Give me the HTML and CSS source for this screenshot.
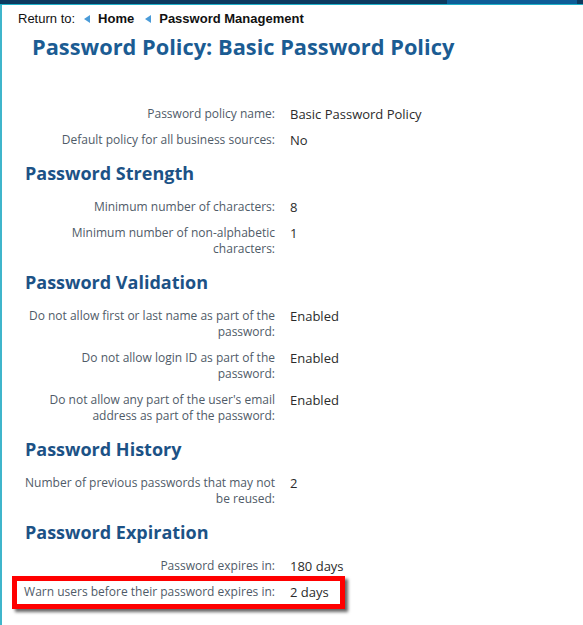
FILE: index.html
```html
<!DOCTYPE html>
<html>
<head>
<meta charset="utf-8">
<link rel="stylesheet" href="styles.css">
</head>
<body>
<div class="topbar"><div class="topbar-seg"></div></div>
<div class="page">
  <nav class="crumbs">
    <span class="crumbs-lead">Return to:</span>
    <span class="tri"></span><a class="crumb" href="#">Home</a>
    <span class="tri"></span><a class="crumb" href="#">Password Management</a>
  </nav>
  <h1 class="title">Password Policy: Basic Password Policy</h1>

  <div class="content">
    <div class="fields first">
      <div class="row"><div class="label">Password policy name:</div><div class="value">Basic Password Policy</div></div>
      <div class="row"><div class="label">Default policy for all business sources:</div><div class="value">No</div></div>
    </div>

    <h2 class="section">Password Strength</h2>
    <div class="fields">
      <div class="row"><div class="label">Minimum number of characters:</div><div class="value">8</div></div>
      <div class="row"><div class="label">Minimum number of non-alphabetic characters:</div><div class="value">1</div></div>
    </div>

    <h2 class="section">Password Validation</h2>
    <div class="fields">
      <div class="row"><div class="label">Do not allow first or last name as part of the password:</div><div class="value">Enabled</div></div>
      <div class="row"><div class="label">Do not allow login ID as part of the password:</div><div class="value">Enabled</div></div>
      <div class="row"><div class="label">Do not allow any part of the user's email address as part of the password:</div><div class="value">Enabled</div></div>
    </div>

    <h2 class="section">Password History</h2>
    <div class="fields">
      <div class="row"><div class="label">Number of previous passwords that may not be reused:</div><div class="value">2</div></div>
    </div>

    <h2 class="section">Password Expiration</h2>
    <div class="fields">
      <div class="row"><div class="label">Password expires in:</div><div class="value">180 days</div></div>
      <div class="row highlight"><div class="label nowrap">Warn users before their password expires in:</div><div class="value">2 days</div></div>
    </div>
  </div>
</div>
</body>
</html>
```

FILE: styles.css
```css
html, body {
  margin: 0;
  padding: 0;
  background: #fff;
}
body {
  font-family: "Open Sans", "DejaVu Sans", sans-serif;
  height: 625px;
  overflow: hidden;
}
.topbar {
  height: 4px;
  background: #0d3a5f;
  border-bottom: 1px solid #1fb0c8;
  position: relative;
}
.topbar-seg {
  position: absolute;
  left: 447px;
  width: 130px;
  top: 0;
  height: 4px;
  background: #0e5d97;
}
.page {
  border-left: 2px solid #3fb5cb;
  min-height: 620px;
}
.crumbs {
  padding: 6px 0 0 16px;
  font-family: "Liberation Sans", Arial, sans-serif;
  font-size: 13px;
  line-height: 16px;
  color: #111;
  display: flex;
  align-items: center;
}
.crumbs-lead {
  margin-right: 9px;
}
.tri {
  width: 0;
  height: 0;
  border-top: 4px solid transparent;
  border-bottom: 4px solid transparent;
  border-right: 6px solid #4a9bd8;
  margin-right: 8px;
}
.crumb {
  color: #111;
  font-weight: bold;
  text-decoration: none;
  margin-right: 11px;
}
.title {
  margin: 5px 0 0 30px;
  font-size: 21.8px;
  line-height: 30px;
  font-weight: 700;
  color: #1b5c93;
}
.content {
  padding-left: 23px;
}
.fields {
  display: flex;
  flex-direction: column;
  gap: 10px;
}
.fields.first {
  margin-top: 44px;
}
.row {
  display: flex;
  gap: 15px;
  font-size: 12px;
  line-height: 16px;
}
.label {
  width: 250px;
  flex-shrink: 0;
  text-align: right;
  color: #4f5b68;
}
.label.nowrap {
  white-space: nowrap;
  display: flex;
  justify-content: flex-end;
}
.value {
  font-size: 13px;
  color: #2b2b2b;
}
.section {
  margin: 13px 0 14px 0;
  font-size: 18px;
  line-height: 24px;
  font-weight: 700;
  color: #1c5286;
}
.highlight {
  width: fit-content;
  margin: -8px 0 -9px -13px;
  padding: 3px 11px 4px 8px;
  border: 5px solid #f00;
  box-shadow: 3px 3px 3px rgba(0, 0, 0, 0.6);
}
```
